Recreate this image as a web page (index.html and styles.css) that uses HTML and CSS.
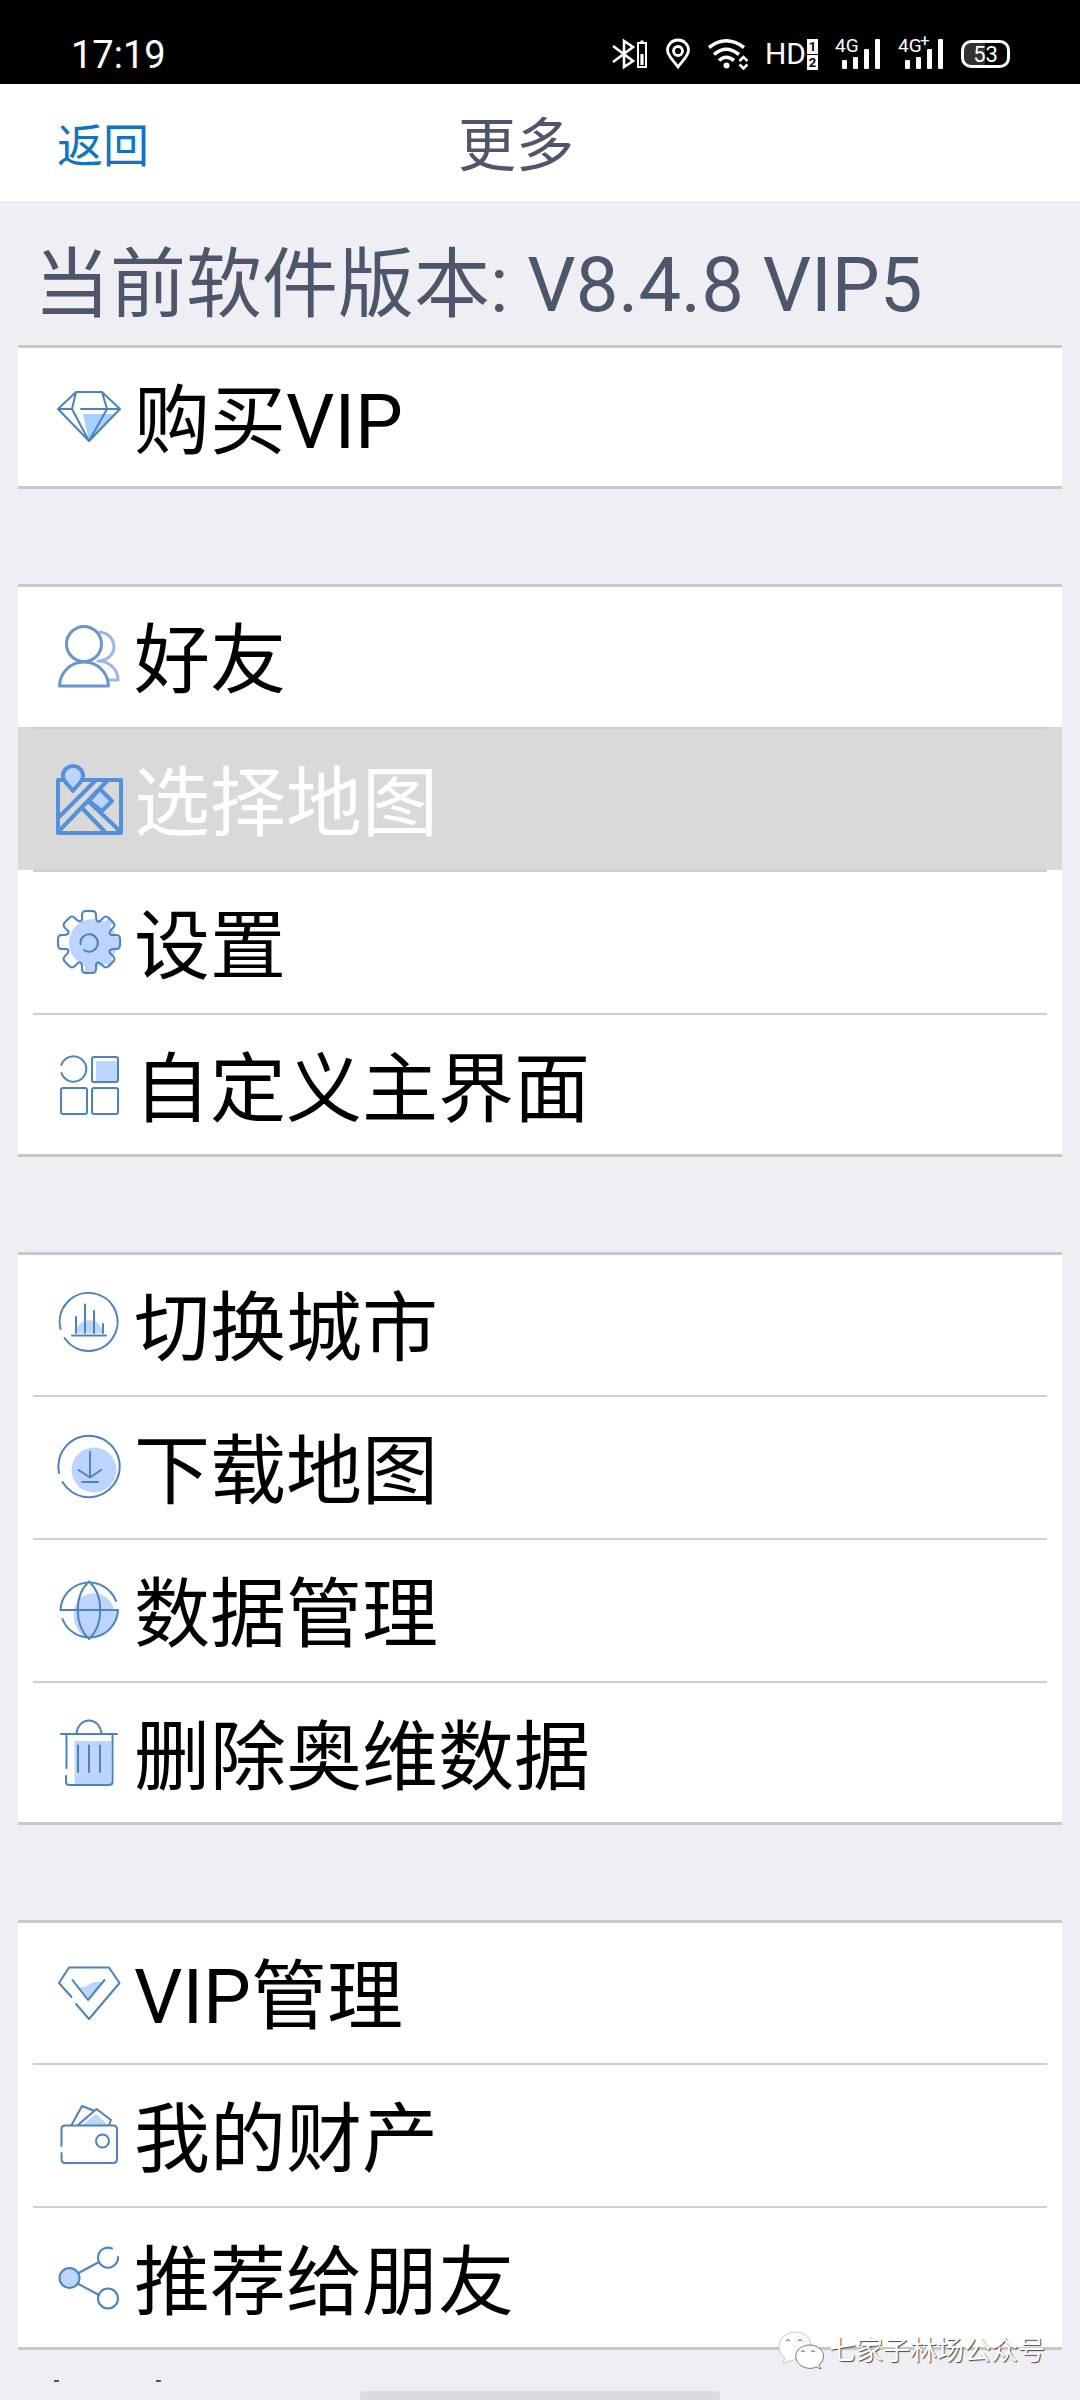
FILE: index.html
```html
<!DOCTYPE html>
<html lang="zh-CN">
<head>
<meta charset="utf-8">
<meta name="viewport" content="width=device-width, initial-scale=1">
<title>更多</title>
<link rel="stylesheet" href="styles.css">
</head>
<body>
<div class="status">
  <span class="clock">17:19</span>
  <div class="status-icons">
    <svg width="36" height="32" viewBox="0 0 36 32" fill="none" stroke="#fff" stroke-width="2.6"><path d="M1 8 21 23 12 29V3L21 9 1 24"/><path d="M26 5h8v24h-8zM28.500 3.500h3" stroke-width="2"/><path d="M30 16v11" stroke-width="3.200"/></svg>
    <svg width="26" height="32" viewBox="0 0 26 32" fill="none" stroke="#fff" stroke-width="2.8"><path d="M13 29C8 22 2.500 18 2.500 12a10.500 10 0 0 1 21 0C23.500 18 18 22 13 29Z"/><circle cx="13" cy="13" r="4.500"/></svg>
    <svg width="40" height="32" viewBox="0 0 40 32" fill="none" stroke="#fff" stroke-width="3.600"><path d="M1 9.500Q18-4 36 9.500M6 16.500Q18 6 31 16.500M11 22.500Q18 16 26 22.500"/><circle cx="18.500" cy="27.500" r="3" fill="#fff" stroke="none"/><path d="M31.500 23 35.500 19l4 4M31.500 26.500l4 4 4-4" stroke-width="2.600"/></svg>
    <div class="hd">HD<span class="sims"><b>1</b><b>2</b></span></div>
    <div class="signal"><span>4G</span><svg width="46" height="32" viewBox="0 0 46 32" fill="#fff"><rect x="7" y="22" width="5" height="9" rx="1"/><rect x="18" y="19" width="5" height="12" rx="1"/><rect x="29" y="11" width="5" height="20" rx="1"/><rect x="40" y="1" width="5" height="30" rx="1"/></svg></div>
    <div class="signal"><span>4G<sup>+</sup></span><svg width="46" height="32" viewBox="0 0 46 32" fill="#fff"><rect x="7" y="22" width="5" height="9" rx="1"/><rect x="18" y="19" width="5" height="12" rx="1"/><rect x="29" y="11" width="5" height="20" rx="1"/><rect x="40" y="1" width="5" height="30" rx="1"/></svg></div>
    <div class="battery">53</div>
  </div>
</div>

<header class="bar">
  <button class="back" type="button">返回</button>
  <h1>更多</h1>
</header>

<main>
  <p class="version">当前软件版本: V8.4.8 VIP5</p>

  <ul class="group">
    <li><a class="row" href="#vip">
      <svg class="icon" viewBox="0 0 70 71"><path class="tint strong" d="M29 32H62L35 59Z"/><path d="M4 27 22 10H48L66 27 35 59ZM22 10 18 27 35 59 53 27 48 10M4 27H18M27 27H66"/></svg>
      <span>购买VIP</span></a></li>
  </ul>

  <ul class="group">
    <li><a class="row" href="#friends">
      <svg class="icon" viewBox="0 0 70 71"><path class="pale" d="M46 11C55 12 60 19 60 26 60 33 53 40 44 40 55 40 64 48 64 59H55"/><path class="mid" d="M5.500 65C6 51 17 41 30 41S54 51 54.500 65Z"/><circle class="mid" cx="30" cy="23" r="17.500"/></svg>
      <span>好友</span></a></li>
    <li class="selected"><a class="row" href="#maps">
      <svg class="icon" viewBox="0 0 70 71"><g class="bold"><path d="M11 16H4V69H67V16H28M5 53 41 17M4 68 53 17M28 44 51 68M34 37 67 68"/><path class="filled" d="M46 25 58 37 48 47 35 37Z"/><path class="filled" d="M19 27C16 22 9 18 9 12a10 10 0 0 1 20 0C29 18 22 22 19 27Z"/></g></svg>
      <span>选择地图</span></a></li>
    <li><a class="row" href="#settings">
      <svg class="icon" viewBox="0 0 70 71"><g transform="translate(35 35)"><circle class="tint" cx="4" cy="1" r="24"/><path class="tint" d="M22-5H30V6H22ZM14 18 19 14 25 20 20 25ZM14-18 19-14 25-20 20-25ZM-4 22H6V30H-4Z"/><g id="teeth"><path id="tooth" d="M22.500-7H27Q31-7 31-3V3Q31 7 27 7H24.500Q19 7.500 20.900 11"/><use href="#tooth" transform="rotate(45)"/><use href="#tooth" transform="rotate(90)"/><use href="#tooth" transform="rotate(135)"/><use href="#tooth" transform="rotate(180)"/><use href="#tooth" transform="rotate(225)"/><use href="#tooth" transform="rotate(270)"/><use href="#tooth" transform="rotate(315)"/></g><path d="M-8.500 2A8.700 8.700 0 1 1-5 8"/></g></svg>
      <span>设置</span></a></li>
    <li><a class="row" href="#layout">
      <svg class="icon" viewBox="0 0 70 71"><rect class="tint" x="42" y="11" width="21" height="20"/><path d="M7.500 15A12.700 12.700 0 1 1 7.500 23"/><rect x="38" y="7" width="26" height="25" rx="2"/><rect x="7" y="38" width="26" height="26" rx="2"/><rect x="38" y="38" width="26" height="26" rx="2"/></svg>
      <span>自定义主界面</span></a></li>
  </ul>

  <ul class="group">
    <li><a class="row" href="#city">
      <svg class="icon" viewBox="0 0 70 71"><path class="tint" d="M22 44C23 27 47 27 49 44Z"/><path d="M6.500 40A29 29 0 1 1 10.500 49M18 46.500H52M22 28V44M31 15.500V44M40 22V44M49 35V44"/></svg>
      <span>切换城市</span></a></li>
    <li><a class="row" href="#download">
      <svg class="icon" viewBox="0 0 70 71"><circle class="tint" cx="40" cy="38" r="22.500"/><path d="M5 41A30.700 30.700 0 1 1 8.500 50M36 20V45.500M24.500 38 36 45.500 47 38M28 50H44"/></svg>
      <span>下载地图</span></a></li>
    <li><a class="row" href="#data">
      <svg class="icon" viewBox="0 0 70 71"><path class="tint" d="M20 42A20 20 0 0 1 60 35H64C64 50 51 64 35 64 27 62 20 52 20 42Z"/><path d="M62 26A28.700 28.700 0 0 0 6.500 35H64A28.700 28.700 0 0 1 8.500 44M35 6.500C20 20 20 50 35 64 50 50 50 20 35 6.500"/></svg>
      <span>数据管理</span></a></li>
    <li><a class="row" href="#clear">
      <svg class="icon" viewBox="0 0 70 71"><path class="tint" d="M20.500 23H57V66H20.500Z"/><path d="M7 16H63M22.500 16C24-2 46-2 47.500 16M12.500 16V50M12 58V64Q12 67 15 67H55Q58.500 67 58.500 64V16M24 27.500V54M35 27.500V54M46 27.500V54"/></svg>
      <span>删除奥维数据</span></a></li>
  </ul>

  <ul class="group">
    <li><a class="row" href="#vip-manage">
      <svg class="icon" viewBox="0 0 70 71"><path class="tint" d="M22 29Q28 32 34 28T48 25L34 43Z"/><path d="M17.500 40 5 26 15 10.500H55L65.500 26 35 62 22 47M18.500 23 34 43 50.500 23"/></svg>
      <span>VIP管理</span></a></li>
    <li><a class="row" href="#assets">
      <svg class="icon" viewBox="0 0 70 71"><path class="tint" d="M28 25 42 14 54 25Z"/><path d="M7.500 46V29Q7.500 25.500 11 25.500H59Q63 25.500 63 29V59Q63 63 59 63H11Q7.500 63 7.500 59V53M17.500 25 28 6 39.500 10.500M24 25 42.500 9 57 20 55 25"/><circle cx="48.500" cy="41" r="6.500"/></svg>
      <span>我的财产</span></a></li>
    <li><a class="row" href="#share">
      <svg class="icon" viewBox="0 0 70 71"><circle class="filled" cx="15.500" cy="35" r="10"/><path d="M24.500 30 45 19M24.500 41 45 52M58 5.500A10 10 0 1 0 64 14"/><circle cx="54" cy="55.500" r="10"/></svg>
      <span>推荐给朋友</span></a></li>
  </ul>
</main>

<footer class="foot">
  <svg class="peek" width="108" height="2" viewBox="0 0 108 2"><path d="M0 0h5v2H0zM102 0h5v2h-5z" fill="#50515c"/></svg>
  <div class="home"></div>
  <div class="watermark">
    <svg width="48" height="42" viewBox="0 0 48 42"><g fill="#fff" stroke="#9a9a9c"><path d="M6 33 8 28C1 23 0 14 5 8 12 0 26 0 32 9L34 15 20 29Z" stroke-opacity=".5"/><path d="M44 39 42 35C48 30 48 23 43 19 37 13 26 14 21 20 16 27 20 36 30 38 34 39 37 38 39 37Z" stroke="#777"/></g><path d="M9 11q2-3 4 0M21 11q2-3 4 0M24 22q2-3 4 0M34 22q2-3 4 0" fill="none" stroke="#555"/></svg>
    <span>七家子林场公众号</span>
  </div>
</footer>
</body>
</html>
```
FILE: styles.css
```css
* { box-sizing: border-box; }

body {
  margin: 0;
  min-height: 100vh;
  display: flex;
  flex-direction: column;
  background: #efeef3;
  color: #000;
  font-family: Roboto, "Noto Sans CJK SC", sans-serif;
}

.status {
  display: flex;
  justify-content: space-between;
  align-items: flex-end;
  height: 84px;
  padding: 0 70px 14px 71px;
  background: #000;
  color: #fff;
}

.clock { font-size: 38px; line-height: 30px; }

.status-icons { display: flex; align-items: center; gap: 17px; height: 32px; }

.hd {
  display: flex;
  align-items: center;
  font-size: 30px;
  line-height: 32px;
}

.sims { display: grid; gap: 1px; margin-left: 1px; }

.sims b {
  width: 11px;
  background: #fff;
  color: #000;
  font-size: 13px;
  line-height: 15px;
  text-align: center;
}

.signal { position: relative; height: 32px; }

.signal span {
  position: absolute;
  left: 0;
  top: 0;
  font-size: 19px;
  line-height: 16px;
}

.signal sup { position: absolute; left: 22px; top: -6px; font-size: 17px; line-height: 16px; }

.battery {
  width: 49px;
  height: 28px;
  border: 3px solid #fff;
  border-radius: 10px;
  background: linear-gradient(90deg, #333 50%, #000 50%);
  font-size: 22px;
  line-height: 23px;
  text-align: center;
}

.bar {
  display: grid;
  grid-template-columns: 1fr auto 1fr;
  align-items: center;
  height: 118px;
  padding: 6px 105px 0 57px;
  background: #fff;
  border-bottom: 1px solid #e9e9ec;
}

.back {
  justify-self: start;
  padding: 0;
  border: 0;
  background: none;
  color: #1272c4;
  font: inherit;
  font-size: 46px;
  line-height: 64px;
}

h1 {
  margin: 0;
  color: #51556a;
  font-size: 58px;
  font-weight: 400;
  line-height: 64px;
}

main { padding: 0 18px; }

.version {
  margin: 0;
  padding: 24px 16px 0;
  color: #4f566b;
  font-size: 76px;
  line-height: 119px;
}

.group {
  margin: 0 0 95px;
  padding: 0 0 1px;
  list-style: none;
  background: #fff;
  box-shadow: inset 0 3px #c8c8cb, inset 0 -3px #c8c8cb;
}

.group:last-child { margin-bottom: 0; }

.row {
  display: flex;
  align-items: center;
  gap: 10px;
  height: 143px;
  margin: 0 15px;
  padding-left: 21px;
  border-top: 2px solid transparent;
  color: inherit;
  font-size: 76px;
  text-decoration: none;
}

.row span { padding-top: 8px; line-height: 90px; }

li + li .row { border-top-color: #cfcfd1; }

.selected { background: #d9d9d9; color: #fff; }

.icon {
  flex: none;
  width: 70px;
  height: 71px;
  fill: none;
  stroke: #4a83bd;
  stroke-width: 2;
  stroke-linecap: round;
  stroke-linejoin: round;
}

.icon .tint { fill: #bdd5fd; stroke: none; }
.icon .strong { fill: #a9d0fb; }
.icon .filled { fill: #bdd5fd; }
.icon .mid { fill: #fff; stroke: #6796cd; stroke-width: 3; }
.icon .pale { stroke: #9bb8e4; stroke-width: 3; }
.icon .bold { stroke: #5590dc; stroke-width: 4; }

.foot { position: relative; height: 50px; }

.peek { position: absolute; left: 54px; top: 30px; }

.home {
  position: absolute;
  left: 50%;
  bottom: 0;
  width: 360px;
  height: 9px;
  margin-left: -180px;
  border-radius: 5px 5px 0 0;
  background: #dbdae0;
}

.watermark {
  position: absolute;
  right: 35px;
  bottom: 28px;
  display: flex;
  align-items: center;
  gap: 4px;
  color: #fff;
  font-size: 27px;
  line-height: 42px;
  text-shadow: 1px 1px 1px #444;
}
```
